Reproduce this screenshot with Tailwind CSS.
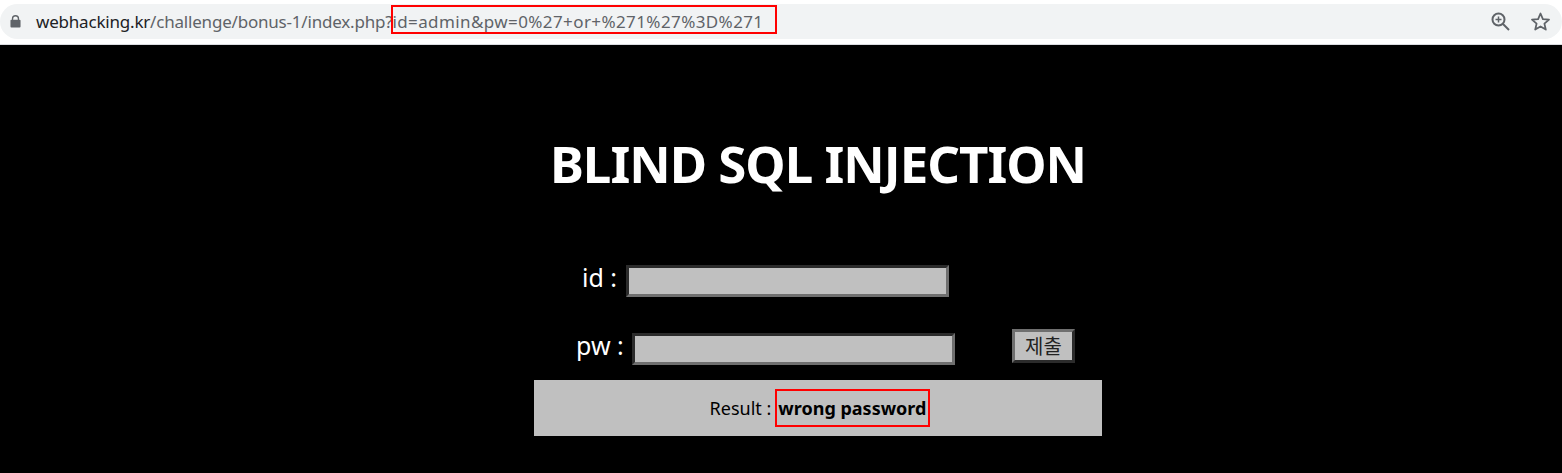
<!DOCTYPE html>
<html lang="en">
<head>
    <meta charset="UTF-8">
    <title>Blind SQL Injection</title>
    <script src="https://cdn.jsdelivr.net/npm/@tailwindcss/browser@4"></script>
</head>
<body class="bg-black h-[473px] overflow-hidden font-['Noto_Sans','Noto_Sans_CJK_KR',sans-serif]">
    <!-- browser address bar -->
    <div class="bg-white h-[45px] pt-1 border-b border-[#dadce0]">
        <div class="relative h-[35px] bg-[#f1f3f4] rounded-full flex items-center pl-[10px] pr-[11px]">
            <svg class="w-[11px] h-[13px] mr-[15px]" viewBox="0 0 12 14" fill="#5f6368">
                <path d="M2 5V4a4 4 0 0 1 8 0v1h.5A1 1 0 0 1 11.500 6v6.500a1 1 0 0 1-1 1h-9a1 1 0 0 1-1-1V6a1 1 0 0 1 1-1H2zm1.500 0h5V4a2.500 2.500 0 0 0-5 0v1z"/>
            </svg>
            <span class="text-[17px] tracking-[-0.2px] text-[#202124] whitespace-nowrap">webhacking.kr<span class="text-[#5f6368]">/challenge/bonus-1/index.php?<span class="tracking-[0.4px]">id=admin&amp;pw=0%27+or+%271%27%3D%271</span></span></span>
            <div class="ml-auto flex items-center gap-[19px]">
                <svg class="w-[21px] h-[21px]" viewBox="0 0 21 21" fill="none" stroke="#5f6368" stroke-width="2">
                    <circle cx="8.500" cy="8.500" r="6"/>
                    <path d="M13 13l6 6"/>
                    <path d="M8.500 5.500v6M5.500 8.500h6" stroke-width="1.500"/>
                </svg>
                <svg class="w-[21px] h-[21px]" viewBox="0 0 21 21" fill="none" stroke="#5f6368" stroke-width="1.800" stroke-linejoin="round">
                    <path d="M10.500 2.500l2.400 5.600 6.100.5-4.600 4 1.400 6-5.300-3.200-5.300 3.200 1.400-6-4.600-4 6.100-.5z"/>
                </svg>
            </div>
            <!-- red annotation on the query string -->
            <div class="absolute left-[391px] top-[1px] w-[386px] h-[29px] border-2 border-[#ff0000]"></div>
        </div>
    </div>

    <div class="ml-[534px] w-[568px] text-white">
        <h1 class="mt-[80px] h-[76px] leading-[76px] text-center text-[51px] tracking-[-1px] font-bold whitespace-nowrap">BLIND SQL INJECTION</h1>

        <div class="mt-[64px] h-[32px] flex items-center pl-[48px]">
            <span class="w-[44px] text-[25px] -mt-[7px] whitespace-nowrap">id :</span>
            <input type="text" class="w-[323px] h-[32px] bg-[#c0c0c0] border-[3px] border-t-[#2b2b2b] border-l-[#2b2b2b] border-b-[#6f6f6f] border-r-[#6f6f6f]">
        </div>

        <div class="mt-[32px] h-[37px] flex items-center pl-[42px]">
            <span class="w-[56px] text-[25px] -mt-[4px] whitespace-nowrap">pw :</span>
            <input type="text" class="w-[323px] h-[32px] mt-[3px] bg-[#c0c0c0] border-[3px] border-t-[#2b2b2b] border-l-[#2b2b2b] border-b-[#6f6f6f] border-r-[#6f6f6f]">
            <button class="ml-[57px] w-[63px] h-[34px] -mt-[4px] bg-[#c0c0c0] text-[#222] text-[20px] border-[3px] border-t-[#6f6f6f] border-l-[#6f6f6f] border-b-[#2b2b2b] border-r-[#2b2b2b]">제출</button>
        </div>

        <div class="mt-[14px] h-[56px] bg-[#c0c0c0] text-black flex items-center justify-center text-[18px]">
            <span class="whitespace-nowrap pt-[1px]">Result :</span>
            <span class="relative ml-[7px] pt-[1px] font-bold whitespace-nowrap">wrong password
                <span class="absolute -left-[3px] -right-[4px] top-[-5px] bottom-[-5px] border-2 border-[#ff0000]"></span>
            </span>
        </div>
    </div>
</body>
</html>
